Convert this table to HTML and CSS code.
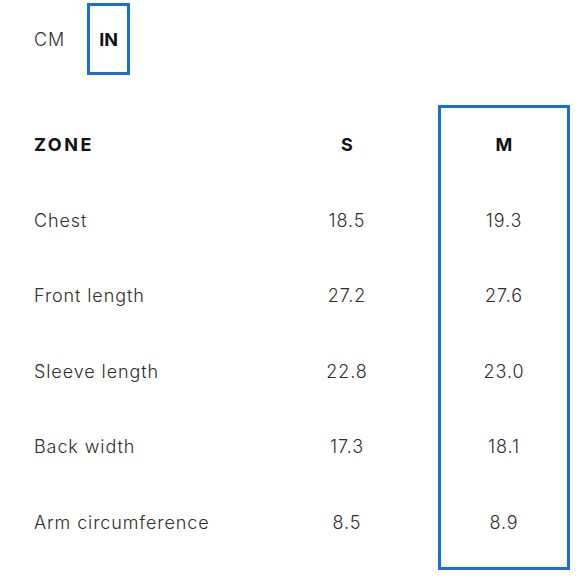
FILE: index.html
```html
<!DOCTYPE html>
<html>
<head>
<meta charset="utf-8">
<link rel="stylesheet" href="styles.css">
</head>
<body>
<div class="page">
  <div class="units">
    <span class="unit">CM</span>
    <span class="unit unit-active">IN</span>
  </div>
  <div class="table">
    <div class="highlight"></div>
    <div class="cell head label r1">ZONE</div>
    <div class="cell head num c2 r1">S</div>
    <div class="cell head num c3 r1">M</div>

    <div class="cell label r2">Chest</div>
    <div class="cell num c2 r2">18.5</div>
    <div class="cell num c3 r2">19.3</div>

    <div class="cell label r3">Front length</div>
    <div class="cell num c2 r3">27.2</div>
    <div class="cell num c3 r3">27.6</div>

    <div class="cell label r4">Sleeve length</div>
    <div class="cell num c2 r4">22.8</div>
    <div class="cell num c3 r4">23.0</div>

    <div class="cell label r5">Back width</div>
    <div class="cell num c2 r5">17.3</div>
    <div class="cell num c3 r5">18.1</div>

    <div class="cell label r6">Arm circumference</div>
    <div class="cell num c2 r6">8.5</div>
    <div class="cell num c3 r6">8.9</div>
  </div>
</div>
</body>
</html>
```
FILE: styles.css
```css
html, body {
  margin: 0;
  padding: 0;
  background: #fff;
}
.page {
  width: 580px;
  height: 580px;
  font-family: Inter, "Liberation Sans", Arial, sans-serif;
  color: #2e2e2e;
  overflow: hidden;
}
.units {
  display: flex;
  align-items: center;
  padding: 3px 0 0 34px;
  height: 72px;
  gap: 22px;
}
.unit {
  font-size: 18px;
  letter-spacing: 0.9px;
  color: #333;
  font-weight: 300;
}
.unit-active {
  box-sizing: border-box;
  height: 72px;
  width: 43px;
  border: 3px solid #1a6fd4;
  display: flex;
  align-items: center;
  justify-content: center;
  font-weight: 700;
  letter-spacing: 0;
  color: #111;
}
.table {
  margin-top: 30px;
  display: grid;
  grid-template-columns: 34px 236px 154px 14px 132px;
  grid-template-rows: 2px repeat(6, 75.5px) 10px;
}
.highlight {
  grid-column: 5;
  grid-row: 1 / -1;
  border: 3px solid #1a6fd4;
  box-sizing: border-box;
}
.cell {
  display: flex;
  align-items: center;
  font-size: 18px;
  font-weight: 300;
  letter-spacing: 0.9px;
}
.label { grid-column: 2; }
.num { justify-content: center; }
.c2 { grid-column: 3; }
.c3 { grid-column: 5; }
.head {
  font-weight: 700;
  color: #111;
  font-size: 18px;
  letter-spacing: 0;
}
.label.head { letter-spacing: 2.5px; }
.r1 { grid-row: 2; }
.r2 { grid-row: 3; }
.r3 { grid-row: 4; }
.r4 { grid-row: 5; }
.r5 { grid-row: 6; }
.r6 { grid-row: 7; }
```
